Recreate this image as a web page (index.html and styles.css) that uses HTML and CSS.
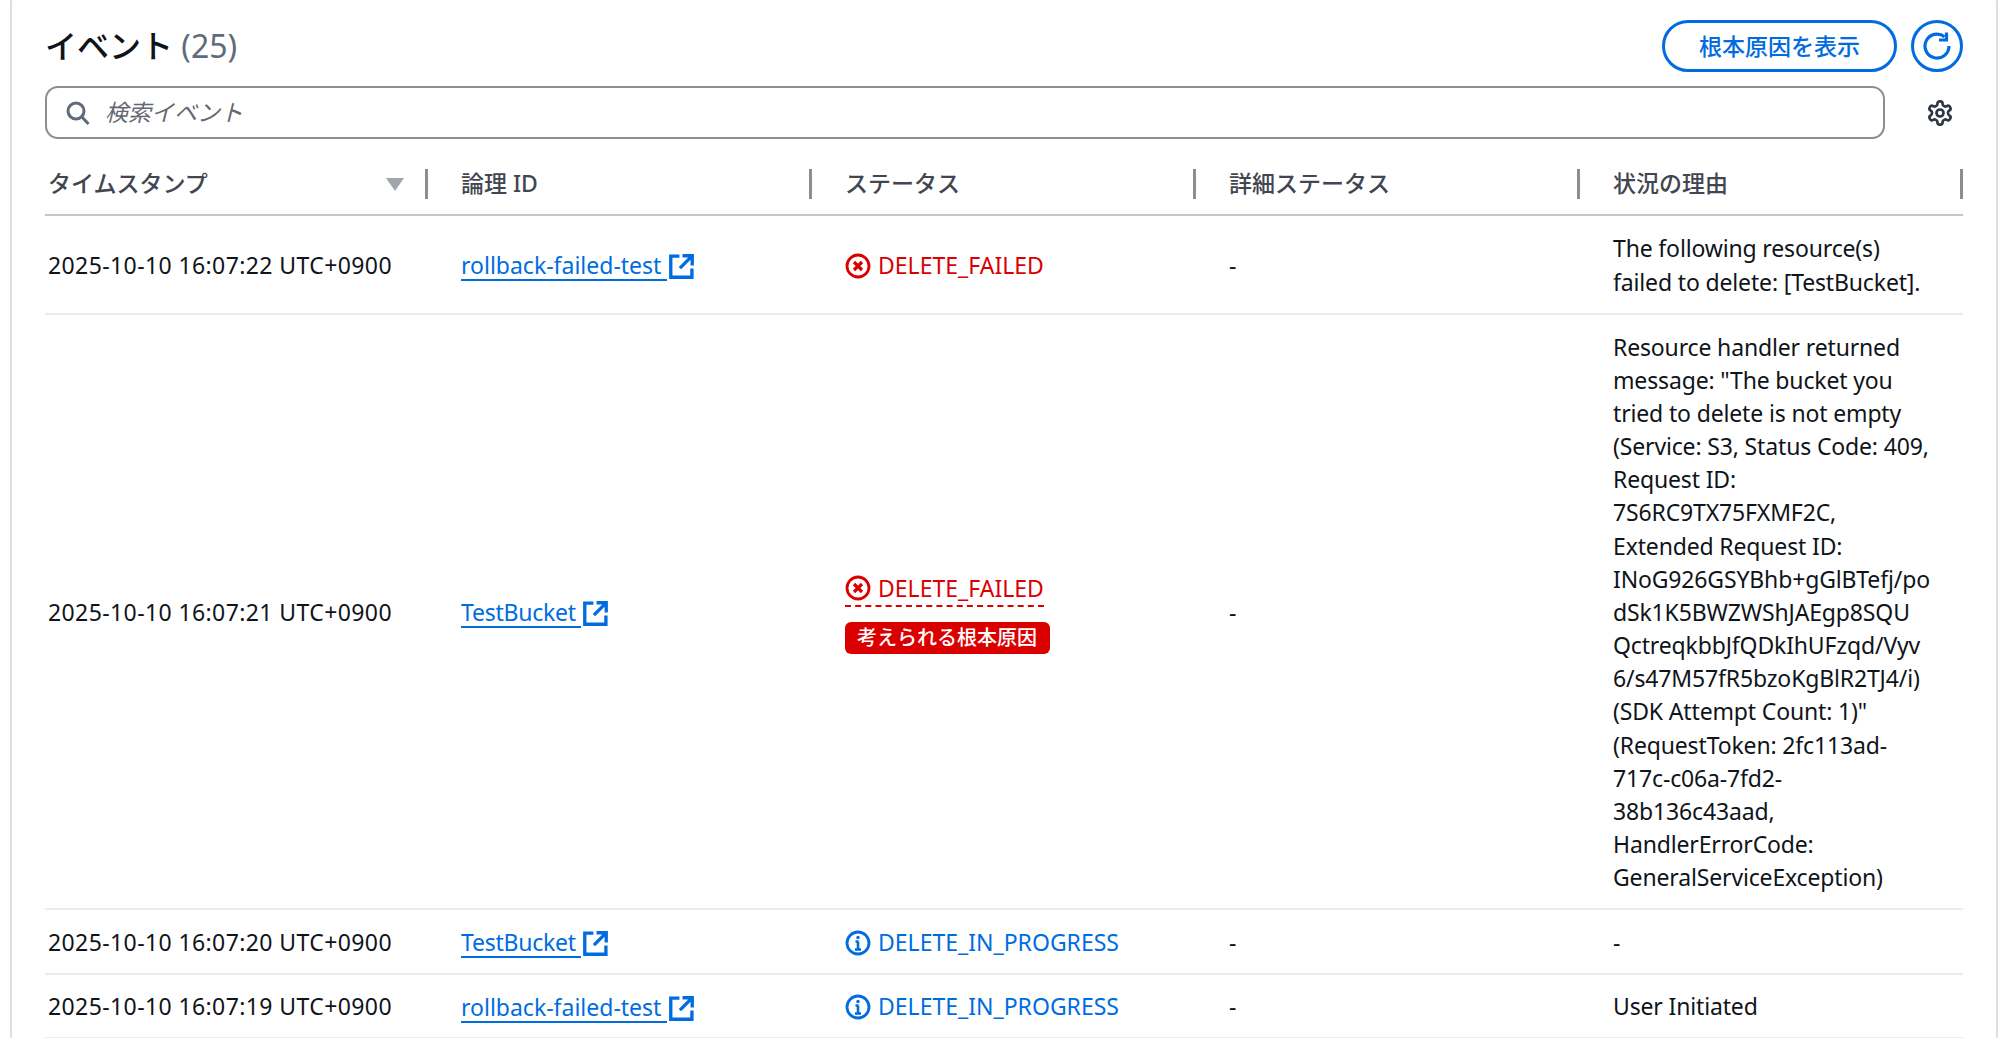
FILE: index.html
```html
<!DOCTYPE html>
<html lang="ja">
<head>
<meta charset="utf-8">
<title>イベント</title>
<link rel="stylesheet" href="styles.css">
</head>
<body>
<svg class="defs" width="0" height="0" aria-hidden="true">
  <symbol id="ext" viewBox="0 0 24 24"><path d="M10 2H1.700v20.300H22V14" fill="none" stroke="currentColor" stroke-width="3.200"/><path d="M10.500 13.500 21 3M13 1.700h9.300V11" fill="none" stroke="currentColor" stroke-width="3.200"/></symbol>
  <symbol id="err" viewBox="0 0 26 26"><circle cx="13" cy="13" r="11" fill="none" stroke="currentColor" stroke-width="2.800"/><path d="M9 9l8 8M17 9l-8 8" fill="none" stroke="currentColor" stroke-width="3.200"/></symbol>
  <symbol id="inf" viewBox="0 0 26 26"><circle cx="13" cy="13" r="11" fill="none" stroke="currentColor" stroke-width="2.800"/><path d="M13 11.500v8M10 19.500h6M10.500 11.500h3" fill="none" stroke="currentColor" stroke-width="2.600"/><circle cx="13" cy="7.500" r="1.700" fill="currentColor"/></symbol>
</svg>
<main class="card">
  <header class="head">
    <h1 class="title">イベント <span class="count">(25)</span></h1>
    <div class="actions">
      <button class="btn">根本原因を表示</button>
      <button class="btn-icon" aria-label="更新">
        <svg width="30" height="30" viewBox="0 0 30 30"><path d="M27 15A12 12 0 1 1 22.500 5.700" fill="none" stroke="currentColor" stroke-width="3.200"/><path d="M24.500 1.500v7.500h-7.500" fill="none" stroke="currentColor" stroke-width="3.200"/></svg>
      </button>
    </div>
  </header>
  <div class="tools">
    <div class="search">
      <svg width="26" height="26" viewBox="0 0 26 26"><circle cx="11" cy="11" r="8" fill="none" stroke="#5f6b7a" stroke-width="3"/><path d="M16.500 16.500 23.500 24" fill="none" stroke="#5f6b7a" stroke-width="3"/></svg>
      <span class="placeholder">検索イベント</span>
    </div>
    <button class="gear" aria-label="設定">
      <svg width="28" height="28" viewBox="0 0 24 24" fill="none" stroke="#2c3644" stroke-width="2.300" stroke-linejoin="round"><path d="M12.220 2h-.44a2 2 0 0 0-2 2v.18a2 2 0 0 1-1 1.730l-.43.25a2 2 0 0 1-2 0l-.15-.08a2 2 0 0 0-2.730.73l-.22.38a2 2 0 0 0 .73 2.730l.15.1a2 2 0 0 1 1 1.720v.51a2 2 0 0 1-1 1.740l-.15.09a2 2 0 0 0-.73 2.730l.22.38a2 2 0 0 0 2.730.73l.15-.08a2 2 0 0 1 2 0l.43.25a2 2 0 0 1 1 1.730V20a2 2 0 0 0 2 2h.44a2 2 0 0 0 2-2v-.18a2 2 0 0 1 1-1.730l.43-.25a2 2 0 0 1 2 0l.15.08a2 2 0 0 0 2.730-.73l.22-.39a2 2 0 0 0-.73-2.730l-.15-.08a2 2 0 0 1-1-1.740v-.5a2 2 0 0 1 1-1.740l.15-.09a2 2 0 0 0 .73-2.730l-.22-.38a2 2 0 0 0-2.730-.73l-.15.08a2 2 0 0 1-2 0l-.43-.25a2 2 0 0 1-1-1.730V4a2 2 0 0 0-2-2z"/><circle cx="12" cy="12" r="3"/></svg>
    </button>
  </div>
  <div class="table">
    <div class="row row-head">
      <div class="th th-sort"><span>タイムスタンプ</span><i class="caret"></i></div>
      <div class="th">論理 ID</div>
      <div class="th">ステータス</div>
      <div class="th">詳細ステータス</div>
      <div class="th">状況の理由</div>
    </div>
    <div class="row r1">
      <div class="td ts">2025-10-10 16:07:22 UTC+0900</div>
      <div class="td"><a class="link">rollback-failed-test <svg class="ext"><use href="#ext"/></svg></a></div>
      <div class="td"><span class="st err"><svg class="st-ic"><use href="#err"/></svg>DELETE_FAILED</span></div>
      <div class="td">-</div>
      <div class="td">The following resource(s)<br>failed to delete: [TestBucket].</div>
    </div>
    <div class="row r2">
      <div class="td ts">2025-10-10 16:07:21 UTC+0900</div>
      <div class="td"><a class="link tight">TestBucket <svg class="ext"><use href="#ext"/></svg></a></div>
      <div class="td td-stack">
        <span class="st err dashed"><svg class="st-ic"><use href="#err"/></svg>DELETE_FAILED</span>
        <span class="badge">考えられる根本原因</span>
      </div>
      <div class="td">-</div>
      <div class="td">Resource handler returned<br>message: "The bucket you<br>tried to delete is not empty<br>(Service: S3, Status Code: 409,<br>Request ID:<br>7S6RC9TX75FXMF2C,<br>Extended Request ID:<br>INoG926GSYBhb+gGlBTefj/po<br>dSk1K5BWZWShJAEgp8SQU<br>QctreqkbbJfQDkIhUFzqd/Vyv<br>6/s47M57fR5bzoKgBlR2TJ4/i)<br>(SDK Attempt Count: 1)"<br>(RequestToken: 2fc113ad-<br>717c-c06a-7fd2-<br>38b136c43aad,<br>HandlerErrorCode:<br>GeneralServiceException)</div>
    </div>
    <div class="row r3">
      <div class="td ts">2025-10-10 16:07:20 UTC+0900</div>
      <div class="td"><a class="link tight">TestBucket <svg class="ext"><use href="#ext"/></svg></a></div>
      <div class="td"><span class="st inf"><svg class="st-ic"><use href="#inf"/></svg>DELETE_IN_PROGRESS</span></div>
      <div class="td">-</div>
      <div class="td">-</div>
    </div>
    <div class="row r4">
      <div class="td ts">2025-10-10 16:07:19 UTC+0900</div>
      <div class="td"><a class="link">rollback-failed-test <svg class="ext"><use href="#ext"/></svg></a></div>
      <div class="td"><span class="st inf"><svg class="st-ic"><use href="#inf"/></svg>DELETE_IN_PROGRESS</span></div>
      <div class="td">-</div>
      <div class="td">User Initiated</div>
    </div>
  </div>
</main>
</body>
</html>
```
FILE: styles.css
```css
html, body { margin: 0; height: 100%; overflow: hidden; background: #fff; }
body {
  font-family: "Noto Sans", "Noto Sans CJK JP", sans-serif;
  font-size: 23px;
  line-height: 33.150px;
  color: #0f141a;
}
.defs { position: absolute; }
.card {
  margin: -22px 2px 0 10px;
  height: 1100px;
  box-sizing: border-box;
  padding: 22px 33px 0 33px;
  border: 2px solid #dedee3;
  border-radius: 26px;
}
.head { display: flex; justify-content: space-between; align-items: center; height: 52px; padding-top: 18px; }
.title { margin: 0; font-size: 32px; font-weight: 500; line-height: 52px; color: #0f141a; }
.count { font-weight: 400; color: #5f6b7a; }
.actions { display: flex; gap: 14px; }
button { font-family: inherit; background: #fff; padding: 0; cursor: pointer; }
.btn {
  width: 235px; height: 52px; box-sizing: border-box;
  border: 3px solid #006ce0; border-radius: 26px; padding-bottom: 2px;
  color: #006ce0; font-size: 23px; font-weight: 500;
}
.btn-icon {
  width: 52px; height: 52px; box-sizing: border-box;
  border: 3px solid #006ce0; border-radius: 50%;
  color: #006ce0; display: flex; align-items: center; justify-content: center;
}
.tools { display: flex; align-items: center; margin-top: 14px; }
.search {
  flex: 1; height: 53px; box-sizing: border-box;
  border: 2px solid #8c8c94; border-radius: 13px;
  display: flex; align-items: center; gap: 14px; padding-left: 18px;
}
.placeholder { font-style: italic; color: #656871; }
.gear { width: 78px; border: 0; display: flex; justify-content: flex-end; padding-right: 9px; box-sizing: border-box; }
.table { margin-top: 13px; }
.row {
  display: grid;
  grid-template-columns: 383px 384px 384px 384px 383px;
  border-bottom: 2px solid #ebebf0;
}
.row-head { height: 62px; border-bottom-color: #c6c6cd; }
.th {
  display: flex; align-items: center; justify-content: space-between;
  padding: 0 20px 0 33px; height: 30px; margin-top: 17px;
  font-weight: 500; color: #424650;
  border-right: 3px solid #8c8c94; box-sizing: border-box;
}
.th-sort { padding-left: 3px; }
.caret { width: 0; height: 0; border-left: 9px solid transparent; border-right: 9px solid transparent; border-top: 13px solid #a2a5ae; margin-right: 1px; }
.td { padding: 2px 0 0 33px; display: flex; align-items: center; flex-wrap: wrap; }
.td:first-child { padding-left: 3px; }
.td:last-child { display: block; align-self: center; letter-spacing: -.15px; }
.ts { letter-spacing: .4px; }
.r1 { height: 97px; }
.r2 { height: 593px; }
.r3 { height: 63px; }
.r4 { height: 62px; }
.td-stack { flex-direction: column; align-items: flex-start; justify-content: center; gap: 15px; }
.link { color: #006ce0; border-bottom: 2px solid #006ce0; line-height: 28px; margin-top: 1px; white-space: pre; position: relative; }
.tight { letter-spacing: -.25px; }
.ext { width: 25px; height: 25px; position: absolute; left: 100%; bottom: 0; margin-left: 2px; }
.st { display: inline-flex; align-items: center; gap: 7px; }
.st-ic { width: 26px; height: 26px; }
.err { color: #db0000; }
.inf { color: #006ce0; }
.dashed { border-bottom: 2px dashed #db0000; line-height: 33px; }
.badge { background: #db0000; color: #fff; border-radius: 6px; font-size: 20px; font-weight: 500; line-height: 32px; padding: 0 13px 0 12px; }
```
